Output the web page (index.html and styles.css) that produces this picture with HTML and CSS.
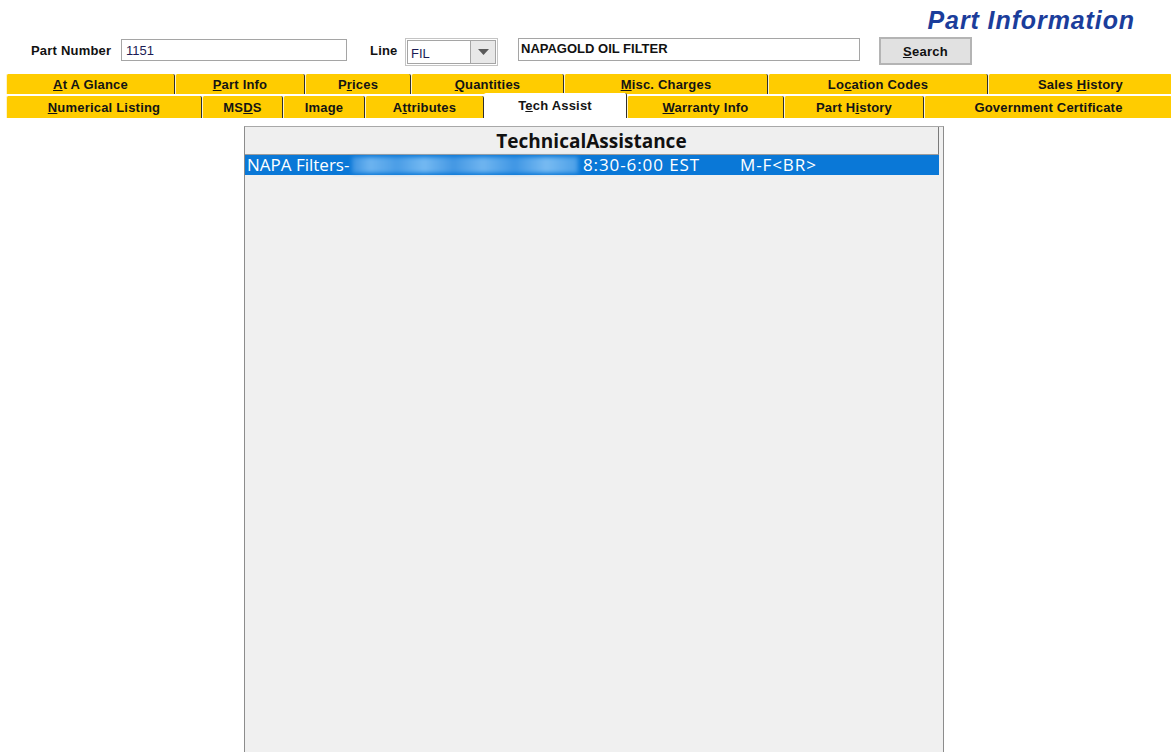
FILE: index.html
```html
<!DOCTYPE html>
<html>
<head>
<meta charset="utf-8">
<title>Part Information</title>
<link rel="stylesheet" href="styles.css">
</head>
<body>
<div class="page">
  <div class="title">Part Information</div>
  <div class="form-row">
    <span class="lbl lbl-part">Part Number</span>
    <div class="field field-part">1151</div>
    <span class="lbl lbl-line">Line</span>
    <div class="combo">
      <span class="combo-text">FIL</span>
      <span class="combo-btn"><svg width="11" height="6" viewBox="0 0 11 6"><path d="M0 0 L11 0 L5.5 6 Z" fill="#5a5a5a"/></svg></span>
    </div>
    <div class="field field-desc">NAPAGOLD OIL FILTER</div>
    <div class="search"><u>S</u>earch</div>
  </div>

  <div class="tabs tabs-1">
    <div class="tab"><u>A</u>t A Glance</div>
    <div class="tab"><u>P</u>art Info</div>
    <div class="tab">P<u>r</u>ices</div>
    <div class="tab"><u>Q</u>uantities</div>
    <div class="tab"><u>M</u>isc. Charges</div>
    <div class="tab">Lo<u>c</u>ation Codes</div>
    <div class="tab tab-last">Sales <u>H</u>istory</div>
  </div>
  <div class="tabs tabs-2">
    <div class="tab"><u>N</u>umerical Listing</div>
    <div class="tab">MS<u>D</u>S</div>
    <div class="tab">Ima<u>g</u>e</div>
    <div class="tab">A<u>t</u>tributes</div>
    <div class="tab tab-selected">T<u>e</u>ch Assist</div>
    <div class="tab"><u>W</u>arranty Info</div>
    <div class="tab">Part H<u>i</u>story</div>
    <div class="tab tab-last">Government Certificate</div>
  </div>

  <div class="panel">
    <div class="grid">
      <div class="grid-head">TechnicalAssistance</div>
      <div class="grid-row">
        <span class="cell-a">NAPA Filters-</span>
        <span class="cell-blur"></span>
        <span class="cell-time">8:30-6:00 EST</span>
        <span class="cell-days">M-F&lt;BR&gt;</span>
      </div>
    </div>
  </div>
</div>
</body>
</html>
```

FILE: styles.css
```css
html, body {
  margin: 0;
  padding: 0;
  overflow: hidden;
  background: #ffffff;
}

.page {
  width: 1171px;
  height: 752px;
  overflow: hidden;
  font-family: "Liberation Sans", Arial, sans-serif;
  color: #111;
}

.title {
  height: 30px;
  padding-top: 5px;
  line-height: 30px;
  text-align: right;
  padding-right: 36px;
  font-size: 25px;
  font-weight: bold;
  font-style: italic;
  letter-spacing: 0.9px;
  color: #1b3d9b;
}

.form-row {
  display: flex;
  align-items: flex-start;
  height: 28px;
  margin-top: 2px;
  padding-left: 31px;
}

.lbl {
  font-size: 13px;
  font-weight: bold;
  letter-spacing: 0.2px;
  line-height: 16px;
  margin-top: 6px;
  color: #111;
}

.lbl-part {
  width: 90px;
}

.lbl-line {
  margin-left: 23px;
  width: 35px;
}

.field {
  box-sizing: border-box;
  height: 22px;
  border: 1px solid #a5a5a5;
  background: #fff;
  font-size: 13px;
  line-height: 20px;
  padding-left: 4px;
}

.field-part {
  width: 226px;
  margin-top: 2px;
  padding-top: 1px;
  color: #1c1c55;
}

.combo {
  box-sizing: border-box;
  width: 93px;
  height: 28px;
  margin-top: 1px;
  border: 1px solid #c4c4c4;
  padding: 1px;
  display: flex;
  background: #fff;
}

.combo-text {
  flex: 1;
  font-size: 13px;
  line-height: 26px;
  padding-left: 3px;
  color: #1c1c55;
  border: 1px solid #a5a5a5;
  border-right: none;
}

.combo-btn {
  box-sizing: border-box;
  width: 26px;
  display: flex;
  align-items: center;
  justify-content: center;
  background: #e8e8e8;
  border: 1px solid #a5a5a5;
}

.field-desc {
  width: 342px;
  margin-left: 20px;
  margin-top: 1px;
  height: 23px;
  font-weight: bold;
  padding-left: 2px;
}

.search {
  box-sizing: border-box;
  width: 93px;
  height: 28px;
  margin-left: 19px;
  border: 2px solid #b4b4b4;
  background: #e1e1e1;
  font-size: 13px;
  font-weight: bold;
  letter-spacing: 0.3px;
  text-align: center;
  line-height: 25px;
  color: #111;
}

.tabs {
  display: grid;
  width: 1172px;
  padding-left: 6px;
  box-sizing: border-box;
}

.tabs-1 {
  margin-top: 9px;
  grid-template-columns: 169px 130px 106px 153px 204px 220px 1fr;
  grid-template-rows: 20px;
}

.tabs-2 {
  margin-top: 2px;
  grid-template-columns: 196px 81px 82px 119px 143px 157px 140px 1fr;
  grid-template-rows: 22px;
}

.tab {
  box-sizing: border-box;
  background: #ffcc00;
  border-left: 1px solid #fff4c8;
  border-right: 1px solid #2e2e2e;
  border-top-left-radius: 2px;
  border-top-right-radius: 2px;
  font-size: 13px;
  font-weight: bold;
  letter-spacing: 0.2px;
  text-align: center;
  color: #141414;
  padding-top: 1px;
  line-height: 19px;
  height: 20px;
}

.tabs-2 .tab {
  height: 22px;
  padding-top: 2px;
  line-height: 20px;
}

.tab-last {
  border-right: none;
}

.tabs-2 .tab-selected {
  background: #ffffff;
  border-left: none;
  margin-top: -3px;
  height: 25px;
  padding-top: 2px;
  line-height: 21px;
}

.panel {
  box-sizing: border-box;
  margin-top: 8px;
  margin-left: 244px;
  width: 700px;
  height: 640px;
  background: #f0f0f0;
  border: 1px solid #8c8c8c;
  border-top-color: #a8a8a8;
}

.grid {
  width: 694px;
}

.grid-head {
  box-sizing: border-box;
  height: 28px;
  background: #efefef;
  border-bottom: 1px solid #9c9c9c;
  border-right: 1px solid #7a7a7a;
  text-align: center;
  font-family: "Open Sans", "Noto Sans", sans-serif;
  font-weight: bold;
  font-size: 19px;
  line-height: 28px;
  color: #111;
}

.grid-row {
  display: flex;
  align-items: center;
  height: 20px;
  background: #0a78d7;
  color: #ffffff;
  font-family: "Open Sans", "Noto Sans", sans-serif;
  font-size: 17px;
  line-height: 20px;
  white-space: nowrap;
}

.cell-a {
  padding-left: 2px;
  width: 105px;
  flex: none;
}

.cell-blur {
  flex: none;
  width: 226px;
  height: 16px;
  background: linear-gradient(90deg, #3a92e2 0%, #6db4f0 8%, #4a9de6 20%, #74b9f2 32%, #4397e3 45%, #6fb5f0 58%, #3f96e4 72%, #78bbf2 86%, #4b9fe7 100%);
  filter: blur(2px);
}

.cell-time {
  flex: none;
  margin-left: 5px;
  width: 157px;
  letter-spacing: 0.9px;
}

.cell-days {
  flex: none;
  letter-spacing: 0.9px;
}
```
